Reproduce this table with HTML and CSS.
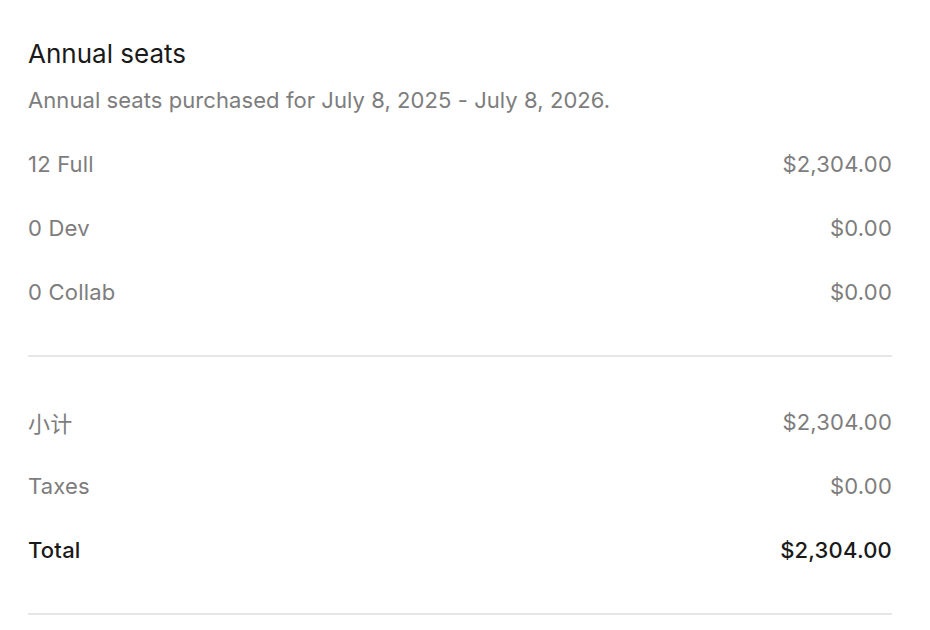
FILE: index.html
```html
<!DOCTYPE html>
<html>
<head>
<meta charset="utf-8">
<link rel="stylesheet" href="styles.css">
</head>
<body>
<section class="card">
  <h2 class="title">Annual seats</h2>
  <p class="subtitle">Annual seats purchased for July 8, 2025 - July 8, 2026.</p>
  <div class="group">
    <div class="row"><span>12 Full</span><span>$2,304.00</span></div>
    <div class="row"><span>0 Dev</span><span>$0.00</span></div>
    <div class="row"><span>0 Collab</span><span>$0.00</span></div>
  </div>
  <div class="group group-summary">
    <div class="row"><span>小计</span><span>$2,304.00</span></div>
    <div class="row"><span>Taxes</span><span>$0.00</span></div>
    <div class="row row-total"><span>Total</span><span>$2,304.00</span></div>
  </div>
</section>
</body>
</html>
```
FILE: styles.css
```css
html, body {
  margin: 0;
  padding: 0;
  background: #ffffff;
}
body {
  font-family: Inter, "Noto Sans CJK SC", sans-serif;
}
.card {
  padding: 38px 38px 0 28px;
}
.title {
  margin: 0;
  font-size: 26px;
  line-height: 32px;
  font-weight: 400;
  color: #1a1a1a;
}
.subtitle {
  margin: 16px 0 0;
  font-size: 22px;
  line-height: 28px;
  letter-spacing: 0.07px;
  color: #7d7d7d;
}
.group {
  margin-top: 18px;
  padding-bottom: 31px;
  border-bottom: 2px solid #e6e6e6;
}
.group-summary {
  margin-top: 0;
  padding-top: 33px;
}
.row {
  display: flex;
  justify-content: space-between;
  align-items: center;
  height: 64px;
  font-size: 22px;
  letter-spacing: 0.2px;
  color: #7d7d7d;
}
.row-total {
  color: #1a1a1a;
  font-weight: 500;
}
```
